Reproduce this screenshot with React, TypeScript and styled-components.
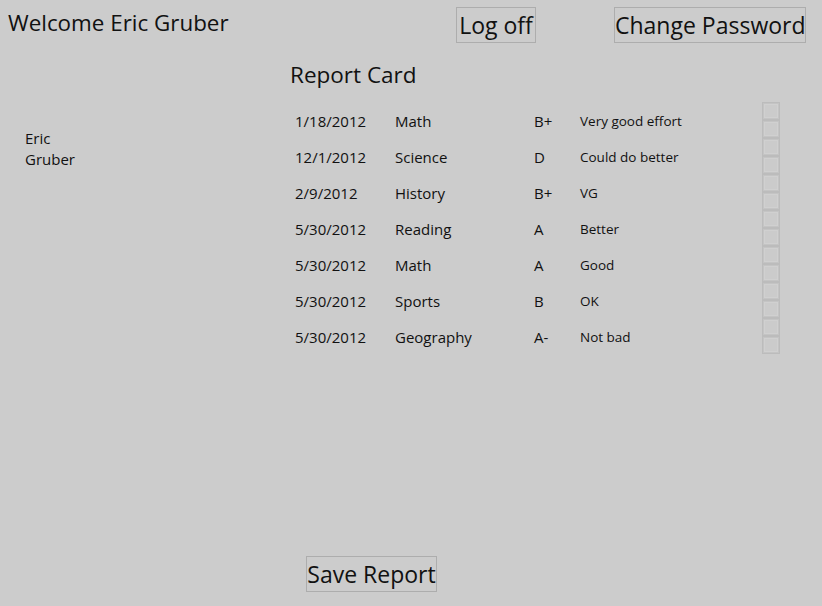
import React from "react";
import styled, { createGlobalStyle } from "styled-components";

const GlobalStyle = createGlobalStyle`
  html, body { margin: 0; padding: 0; background: #cccccc; }
  body { font-family: "Open Sans", "Noto Sans", sans-serif; color: #111; }
`;

const Page = styled.div`
  width: 822px;
  height: 606px;
  display: flex;
  flex-direction: column;
  box-sizing: border-box;
  overflow: hidden;
`;

const Header = styled.header`
  display: flex;
  align-items: flex-start;
  padding-top: 7px;
`;

const Welcome = styled.div`
  width: 448px;
  margin-left: 8px;
  margin-top: 2px;
  font-size: 22.4px;
  line-height: 28px;
`;

const Button = styled.button<{ $ml?: number; $w: number }>`
  margin-left: ${(p) => p.$ml ?? 0}px;
  width: ${(p) => p.$w}px;
  height: 36px;
  padding: 0;
  background: #cccccc;
  border: 1px solid #adadad;
  font-family: "Open Sans", "Noto Sans", sans-serif;
  font-size: 23px;
  line-height: 30px;
  color: #111;
  white-space: nowrap;
  cursor: pointer;
`;

const Main = styled.main`
  display: flex;
  flex: 1;
`;

const Sidebar = styled.aside`
  width: 265px;
  padding-left: 25px;
  padding-top: 85px;
  font-size: 15px;
  line-height: 21px;
`;

const Content = styled.section`
  display: flex;
  flex-direction: column;
`;

const Title = styled.h1`
  margin: 17px 0 0 0;
  font-size: 22.5px;
  font-weight: normal;
  line-height: 30px;
`;

const Table = styled.div`
  margin-top: 13px;
  display: grid;
  grid-template-columns: 100px 139px 46px 182px 18px;
  padding-left: 5px;
`;

const Cell = styled.div<{ $small?: boolean }>`
  height: 36px;
  display: flex;
  align-items: center;
  font-size: ${(p) => (p.$small ? 13.5 : 15)}px;
`;

const BoxStack = styled.div`
  display: flex;
  flex-direction: column;
  margin-top: -1px;
`;

const Box = styled.span`
  width: 18px;
  height: 18px;
  box-sizing: border-box;
  border: 1px solid #bcbcbc;
  box-shadow: inset 0 0 0 1px #c4c4c4, inset 0 0 0 2px #d0d0d0;
  background: #cbcbcb;
`;

const Footer = styled.footer`
  padding-left: 306px;
  padding-bottom: 14px;
`;

const rows = [
  ["1/18/2012", "Math", "B+", "Very good effort"],
  ["12/1/2012", "Science", "D", "Could do better"],
  ["2/9/2012", "History", "B+", "VG"],
  ["5/30/2012", "Reading", "A", "Better"],
  ["5/30/2012", "Math", "A", "Good"],
  ["5/30/2012", "Sports", "B", "OK"],
  ["5/30/2012", "Geography", "A-", "Not bad"],
];

export default function App() {
  return (
    <Page>
      <GlobalStyle />
      <Header>
        <Welcome>Welcome Eric Gruber</Welcome>
        <Button $w={80}>Log off</Button>
        <Button $w={192} $ml={78}>Change Password</Button>
      </Header>
      <Main>
        <Sidebar>
          Eric
          <br />
          Gruber
        </Sidebar>
        <Content>
          <Title>Report Card</Title>
          <Table>
            {rows.map((r, i) => (
              <React.Fragment key={i}>
                <Cell>{r[0]}</Cell>
                <Cell>{r[1]}</Cell>
                <Cell>{r[2]}</Cell>
                <Cell $small>{r[3]}</Cell>
                <BoxStack>
                  <Box />
                  <Box />
                </BoxStack>
              </React.Fragment>
            ))}
          </Table>
        </Content>
      </Main>
      <Footer>
        <Button $w={131}>Save Report</Button>
      </Footer>
    </Page>
  );
}
